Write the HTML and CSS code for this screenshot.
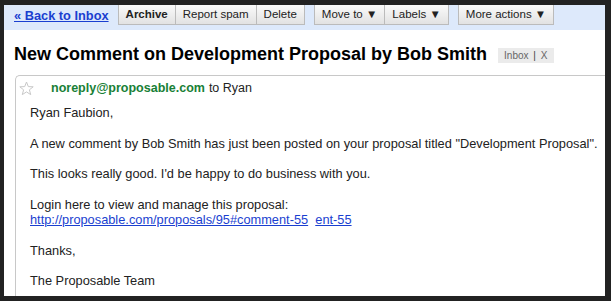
FILE: index.html
```html
<!DOCTYPE html>
<html lang="en">
<head>
  <meta charset="UTF-8">
  <title>New Comment on Development Proposal</title>
  <link rel="stylesheet" href="styles.css">
</head>
<body>
  <div class="frame">
    <div class="toolbar">
      <a class="back" href="#">&laquo; Back to Inbox</a>
      <div class="group">
        <span class="btn bold">Archive</span>
        <span class="btn">Report spam</span>
        <span class="btn">Delete</span>
      </div>
      <div class="group">
        <span class="btn">Move to &#9660;</span>
        <span class="btn">Labels &#9660;</span>
      </div>
      <div class="group">
        <span class="btn">More actions &#9660;</span>
      </div>
    </div>

    <div class="subject">
      <h1>New Comment on Development Proposal by Bob Smith</h1>
      <span class="tag">Inbox <span class="sep">|</span> X</span>
    </div>

    <div class="message">
      <div class="header">
        <svg class="star" width="15" height="15" viewBox="0 0 15 15">
          <path d="M7.5 1 L9.3 5.6 L14.2 5.8 L10.4 8.8 L11.7 13.6 L7.5 10.9 L3.3 13.6 L4.6 8.8 L0.8 5.8 L5.7 5.6 Z" fill="#fff" stroke="#c8c8c8" stroke-width="1"/>
        </svg>
        <span class="sender">noreply@proposable.com</span> to Ryan
      </div>
      <div class="body">
        <p>Ryan Faubion,</p>
        <p>A new comment by Bob Smith has just been posted on your proposal titled "Development Proposal".</p>
        <p>This looks really good. I'd be happy to do business with you.</p>
        <p>Login here to view and manage this proposal:<br>
          <a href="#">http://proposable.com/proposals/95#comment-55</a>&nbsp; <a href="#">ent-55</a></p>
        <p>Thanks,</p>
        <p>The Proposable Team</p>
      </div>
    </div>
  </div>
</body>
</html>
```

FILE: styles.css
```css
* {
  box-sizing: border-box;
}

body {
  margin: 0;
  font-family: Arial, "Liberation Sans", sans-serif;
  background: #222;
}

.frame {
  width: 611px;
  height: 301px;
  overflow: hidden;
  background: #fff;
  border-style: solid;
  border-color: #222;
  border-width: 5px 6px 5px 4px;
}

.toolbar {
  display: flex;
  align-items: flex-start;
  height: 25px;
  padding-left: 10px;
  background: #dde9fb;
}

.back {
  color: #1a3fd0;
  font-size: 12.8px;
  font-weight: bold;
  margin-top: 3px;
  margin-right: 9px;
}

.group {
  display: flex;
  margin-right: 10px;
}

.btn {
  display: block;
  height: 20px;
  line-height: 19px;
  padding: 0 7px;
  font-size: 11.5px;
  color: #222;
  background: linear-gradient(#fafafa, #e2e2e2);
  border: 1px solid #bbb;
  border-top: none;
  margin-right: -1px;
}

.btn.bold {
  font-weight: bold;
}

.subject {
  display: flex;
  align-items: flex-start;
  padding: 13px 0 0 10px;
  height: 45px;
}

h1 {
  margin: 0;
  font-size: 18px;
  line-height: 22px;
  font-weight: bold;
  color: #000;
}

.tag {
  margin: 5px 0 0 11px;
  font-size: 10px;
  line-height: 13px;
  color: #666;
  background: #ebebeb;
  padding: 1px 7px 1px 6px;
}

.tag .sep {
  color: #444;
  padding: 0 2px;
}

.message {
  margin-left: 11px;
  border: 1px solid #c8c8c8;
  border-right: none;
  border-bottom: none;
  border-top-left-radius: 5px;
  height: 400px;
}

.header {
  display: flex;
  align-items: center;
  font-size: 12.5px;
  color: #222;
  padding: 2px 0 0 3px;
  height: 22px;
}

.star {
  margin-right: 17px;
}

.sender {
  color: #188036;
  font-weight: bold;
  margin-right: 4px;
}

.body {
  padding: 7px 0 0 14px;
  font-size: 12.8px;
  line-height: 15.3px;
  color: #222;
}

.body p {
  margin: 0 0 15.3px;
}

.body a {
  color: #1a3fd0;
}
```
